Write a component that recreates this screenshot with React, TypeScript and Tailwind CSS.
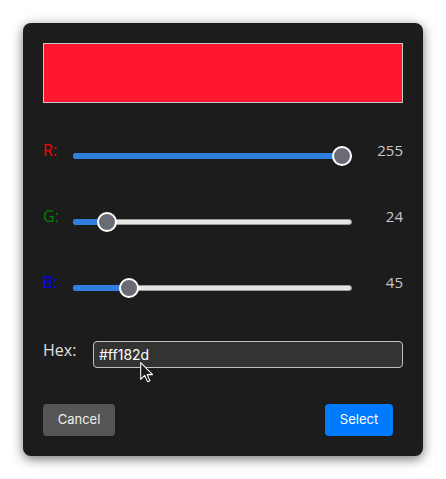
import React from "react";

const rows = [
  { label: "R:", value: 255, color: "text-[#ff0000]" },
  { label: "G:", value: 24, color: "text-[#008000]" },
  { label: "B:", value: 45, color: "text-[#0000ff]" },
];

function Slider({ value }: { value: number }) {
  const travel = 279 - 20;
  const center = 10 + (value / 255) * travel;
  return (
    <div className="relative h-[20px] w-[279px]">
      <div className="absolute left-0 right-0 top-[7px] h-[6px] rounded-full bg-[#e6e6e6] border border-[#9a9a9a]" />
      <div
        className="absolute left-0 top-[7px] h-[6px] rounded-full bg-[#2f7fdf]"
        style={{ width: center }}
      />
      <div
        className="absolute top-0 h-[20px] w-[20px] rounded-full border-2 border-white bg-[#6b6b76]"
        style={{ left: center - 10 }}
      />
    </div>
  );
}

export default function App() {
  return (
    <div className="w-[446px] h-[479px] bg-white pt-[23px] pl-[23px]">
      <div
        className="relative w-[400px] h-[433px] rounded-lg bg-[#1c1c1c] p-5 shadow-[0_3px_12px_rgba(0,0,0,0.55)] flex flex-col"
        style={{ fontFamily: '"Open Sans", "Noto Sans", sans-serif' }}
      >
        <div className="h-[60px] w-full border border-[#c8c8c8] bg-[#ff182d]" />
        <div className="mt-5 flex flex-col">
          {rows.map((r) => (
            <div key={r.label} className="flex h-[66px] items-center">
              <div className={`w-[30px] pb-3 text-[16px] leading-none ${r.color}`}>{r.label}</div>
              <Slider value={r.value} />
              <div className="flex-1 pb-3 text-right text-[15px] leading-none text-[#c4c8cc]">{r.value}</div>
            </div>
          ))}
        </div>
        <div className="mt-5 flex items-start">
          <div className="w-[50px] text-[16px] leading-[18px] text-[#e0e0e0]">Hex:</div>
          <div
            className="flex h-[27px] flex-1 items-center rounded-[4px] border border-[#c0c0c0] bg-[#333333] pl-[5px] text-[14px] text-white"
            style={{ fontFamily: "Inter, sans-serif" }}
          >
            #ff182d
          </div>
        </div>
        <div
          className="mt-[36px] flex justify-between pr-[10px]"
          style={{ fontFamily: "Inter, sans-serif" }}
        >
          <button className="h-[32px] w-[72px] rounded-[4px] bg-[#555555] text-[13px] text-[#eeeeee]">
            Cancel
          </button>
          <button className="h-[32px] w-[68px] rounded-[4px] bg-[#007bff] text-[13px] text-white">
            Select
          </button>
        </div>
        <svg
          className="absolute left-[117px] top-[339px]"
          width="14"
          height="21"
          viewBox="0 0 13 20"
        >
          <path
            d="M0.5 0.5 L0.5 16.5 L4.3 12.8 L7 18.8 L9.3 17.8 L6.7 12 L11.8 12 Z"
            fill="#1c1c1c"
            stroke="#ffffff"
            strokeWidth="1"
            strokeLinejoin="round"
          />
        </svg>
      </div>
    </div>
  );
}
